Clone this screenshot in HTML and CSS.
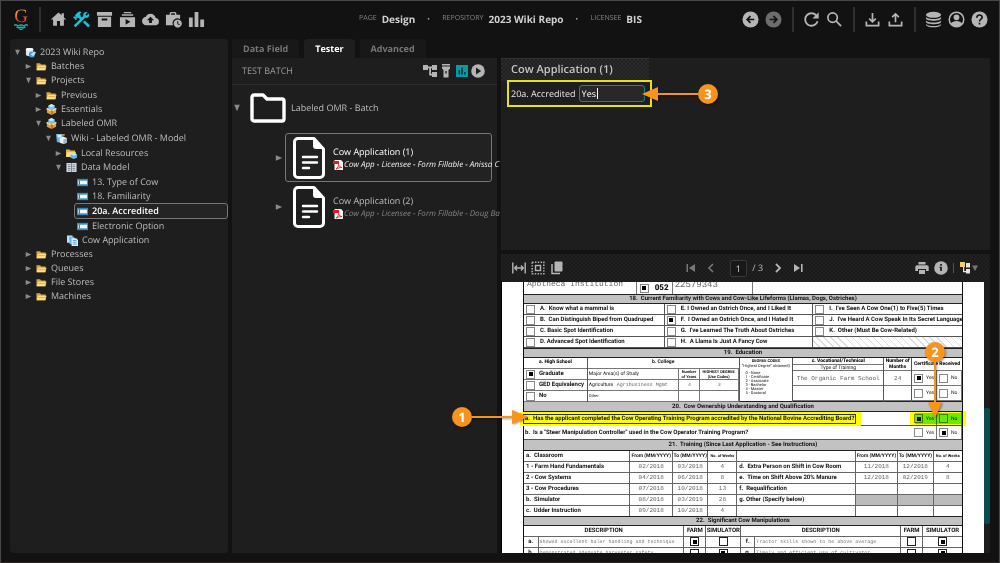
FILE: index.html
```html
<!DOCTYPE html>
<html lang="en">
<head>
<meta charset="utf-8">
<title>Design - 2023 Wiki Repo</title>
<link rel="stylesheet" href="styles.css">
</head>
<body>
<svg class="defs" aria-hidden="true">
  <symbol id="i-arrow" viewBox="0 0 10 10"><path d="M1 1.500l8 3.500-8 3.500z"/></symbol>
  <symbol id="i-folder" viewBox="0 0 12 10"><path fill="#d9a441" d="M.5 1.500h4l1 1.200h5v6.500H.5z"/><path fill="#ffe08a" d="M2.200 4.200h9.300l-1.500 5H.7z"/><path stroke="#c98b2b" stroke-width=".7" fill="none" d="M2.500 6.500c2-1.500 5 1 8-.8"/></symbol>
  <symbol id="i-box" viewBox="0 0 12 12"><path fill="#e0a040" d="M1 5l5 2 5-2v4.500L6 12 1 9.500z"/><path fill="#8a5a1c" d="M6 7v5l1.200-.6V6.500z"/><path fill="#f4cf86" d="M0 5.500L1.500 4 6 6l4.500-2L12 5.500 8 8 6 7 4 8z"/><path fill="#7cc4ee" d="M6 0l3.500 1.800v3L6 6.500 2.500 4.800v-3z"/><path fill="#c9e9fb" d="M6 0l3.500 1.800L6 3.500 2.500 1.800z"/></symbol>
  <symbol id="i-repo" viewBox="0 0 12 12"><path fill="#dfe7ee" d="M1 2.500C1 .5 9 .5 9 2.500v6C9 10.500 1 10.500 1 8.500z"/><ellipse cx="5" cy="2.500" rx="4" ry="1.300" fill="#fff"/><circle cx="7.500" cy="8.200" r="3.300" fill="#4b97d2"/><path fill="#bfe0f7" d="M6 8l4-3 2 1-3 4z"/></symbol>
  <symbol id="i-model" viewBox="0 0 12 12"><path fill="#5fb4e5" d="M0 1h7l1 2v7H1z"/><path fill="#d7effc" d="M1.500 2h4.500v3h-4z"/><path fill="#eef3f6" d="M4 5.500l4-1.500 4 1.500v5L8 12l-4-1.500z"/><path fill="#e2852b" d="M7 1h2.500v2H7z"/><path fill="#9fb6c5" d="M8 7l4-1.500v5L8 12z"/></symbol>
  <symbol id="i-res" viewBox="0 0 12 12"><path fill="#e5b04a" d="M0 1.500h4l1 1.200h5v7H0z"/><path fill="#ffe08a" d="M1 4.500h10l-1.500 5H0z"/><path fill="#63b4e8" d="M5 7l3.500-1.500L12 7v3.500L8.500 12 5 10.500z"/><path fill="#c9e9fb" d="M5 7l3.500-1.500L12 7 8.500 8.500z"/></symbol>
  <symbol id="i-sheet" viewBox="0 0 12 12"><path fill="#d8dbe2" d="M.5 1h11v10H.5z"/><path stroke="#6f7787" stroke-width=".9" d="M2 3h3M2 5h3M2 7h3M2 9h3M7 3h3M7 5h3M7 7h3M7 9h3M6 1v10"/></symbol>
  <symbol id="i-field" viewBox="0 0 12 8"><rect width="12" height="8" fill="#2f8cc4"/><rect x="1" y="2" width="10" height="4" fill="#f4f8fb"/><path stroke="#333" d="M2.500 2v4"/></symbol>
  <symbol id="i-docs" viewBox="0 0 12 12"><path fill="#bfe3f8" d="M0 .5h6v8H0z"/><path fill="#6ab8e6" d="M2 2h6v8H3z"/><path fill="#d6effc" d="M5 3.500h5l2 2V12H5z"/><path stroke="#3f8fc0" stroke-width=".8" d="M6.500 6h4M6.500 8h4M6.500 10h4"/></symbol>
  <symbol id="i-page" viewBox="0 0 32 42"><path fill="none" stroke="#fff" stroke-width="3" stroke-linejoin="round" d="M5 1.500h16L30.500 12v25a3.500 3.500 0 0 1-3.500 3.500H5A3.500 3.500 0 0 1 1.500 37V5A3.500 3.500 0 0 1 5 1.500z"/><path fill="#fff" d="M20 2l10 10h-7c-2 0-3-1-3-3z"/><path stroke="#fff" stroke-width="2.400" stroke-linecap="round" d="M10 20h14M10 25.500h14M10 31h6"/></symbol>
  <symbol id="i-pdf" viewBox="0 0 10 10"><path fill="#f4f4f4" d="M1.500 0H8l2 2v8H1.500z"/><path fill="#e01b1b" d="M0 1h6v3H0z"/><path fill="none" stroke="#d22" stroke-width=".9" d="M3 9c2-1.500 2.500-3 2.500-4.500.5 2 2 3 3.500 3-2 0-4 .5-6 1.500z"/></symbol>
</svg>

<header class="topbar">
  <nav class="tools" aria-label="Main">
    <a class="logo" href="#" aria-label="Home page"><span class="logo-g">G</span><svg class="logo-mark" viewBox="0 0 14 6"><path fill="none" stroke="#16a5a0" stroke-width="1.400" d="M0 1.500l2-1 2 1.500L7 .8l3 1.200 2-1.500 2 1M2.500 3L5 4l2-1 2 1 2.500-1M5.500 5L7 5.600 8.500 5"/></svg></a>
    <span class="sep"></span>
    <button class="tool" aria-label="Home"><svg viewBox="1 2 22 20"><path d="M19 9.300V4h-3v2.600L12 3 2 12h3v8h5v-6h4v6h5v-8h3l-3-2.700z"/></svg></button>
    <button class="tool tool-on" aria-label="Design"><svg viewBox="2 2 20 20"><path d="M13.780 15.300l6 6 2.110-2.160-6-6-2.110 2.160M17.500 10.100c-.39 0-.81-.05-1.140-.19L4.970 21.250l-2.110-2.110 7.410-7.400L8.500 9.960l-.72.7-1.450-1.410v2.860l-.7.7-3.520-3.560.7-.7h2.810l-1.400-1.410 3.560-3.560c1.170-1.170 3.050-1.170 4.220 0L9.890 5.740l1.410 1.400-.71.71 1.790 1.780 1.820-1.880C14.060 7.420 14 7 14 6.630c0-1.970 1.560-3.520 3.500-3.520.59 0 1.110.14 1.580.42L16.410 6.200l1.500 1.500 2.670-2.670c.28.470.42.97.42 1.600 0 1.920-1.550 3.470-3.500 3.470z"/></svg></button>
    <button class="tool" aria-label="Batches"><svg viewBox="0 0 18 18"><path fill-rule="evenodd" d="M1 1h16v4H1zM2 6h14v11H2zM6 8v2h6V8z"/></svg></button>
    <button class="tool" aria-label="Tasks"><svg viewBox="0 0 18 18"><path fill-rule="evenodd" d="M5 1h8v1.500H5zM3 3.500h12V5H3zM1 6.500h16V17H1zM7 8.500v6l5-3z"/></svg></button>
    <button class="tool" aria-label="Imports"><svg viewBox="0 1 24 22"><path d="M19.350 10.040C18.670 6.590 15.640 4 12 4 9.110 4 6.600 5.640 5.350 8.040 2.340 8.360 0 10.910 0 14c0 3.310 2.690 6 6 6h13c2.760 0 5-2.240 5-5 0-2.640-2.050-4.780-4.650-4.960zM14 13v4h-4v-4H7l5-5 5 5h-3z"/></svg></button>
    <button class="tool" aria-label="Jobs"><svg viewBox="0 0 18 18"><path fill-rule="evenodd" d="M6 1h5l1 1v2h4v4.500A5.200 5.200 0 0 0 8.500 15H1V4h4V2zm.5 1.500V4h4V2.500z"/><path fill-rule="evenodd" d="M13.500 9a4.300 4.300 0 1 0 .01 0zM13 10.500h1v2.700l1.800 1-.5.900L13 13.800z"/></svg></button>
    <button class="tool" aria-label="Stats"><svg viewBox="0 0 18 18"><path d="M1 7h4v10H1zM7 1h4v16H7zM13 9h4v8h-4z"/></svg></button>
  </nav>
  <dl class="crumbs">
    <div><dt>PAGE</dt><dd>Design</dd></div>
    <div><dt>REPOSITORY</dt><dd>2023 Wiki Repo</dd></div>
    <div><dt>LICENSEE</dt><dd>BIS</dd></div>
  </dl>
  <nav class="tools tools-end" aria-label="Actions">
    <button class="tool" aria-label="Back"><svg viewBox="0 0 18 18"><circle cx="9" cy="9" r="8.500"/><path fill="none" stroke="#111" stroke-width="1.800" d="M13 9H6M9 5.500L5.500 9 9 12.500"/></svg></button>
    <button class="tool tool-dim" aria-label="Forward"><svg viewBox="0 0 18 18"><circle cx="9" cy="9" r="8.500"/><path fill="none" stroke="#111" stroke-width="1.800" d="M5 9h7M9 5.500l3.500 3.500L9 12.500"/></svg></button>
    <span class="sep"></span>
    <button class="tool" aria-label="Refresh"><svg viewBox="2.500 2.500 19 19"><path d="M17.650 6.350C16.200 4.900 14.210 4 12 4c-4.420 0-7.990 3.580-7.990 8s3.570 8 7.990 8c3.730 0 6.840-2.550 7.730-6h-2.080c-.82 2.330-3.040 4-5.650 4-3.310 0-6-2.690-6-6s2.690-6 6-6c1.660 0 3.140.69 4.220 1.780L13 11h7V4l-2.350 2.350z"/></svg></button>
    <button class="tool" aria-label="Search"><svg viewBox="0 0 18 18"><g fill="none" stroke="currentColor" stroke-width="1.800"><circle cx="7" cy="7" r="5"/><path d="M10.500 10.500L16 16"/></g></svg></button>
    <span class="sep"></span>
    <button class="tool" aria-label="Download"><svg viewBox="0 0 18 18"><path fill="none" stroke="currentColor" stroke-width="1.800" d="M9 2v9M5.500 8L9 11.500 12.500 8M2.500 11v4.500h13V11"/></svg></button>
    <button class="tool" aria-label="Upload"><svg viewBox="0 0 18 18"><path fill="none" stroke="currentColor" stroke-width="1.800" d="M9 12V3M5.500 6.500L9 3l3.500 3.500M2.500 11v4.500h13V11"/></svg></button>
    <span class="sep"></span>
    <button class="tool" aria-label="Repositories"><svg viewBox="0 0 18 18"><ellipse cx="9" cy="4" rx="8" ry="3.200"/><path d="M1 6.300c2 3 14 3 16 0v1.600c-1 3.200-15 3.200-16 0zM1 10c2 3 14 3 16 0v1.600c-1 3.200-15 3.200-16 0zM1 13.700c2 3 14 3 16 0v.8c-1 3.700-15 3.700-16 0z"/></svg></button>
    <button class="tool" aria-label="Account"><svg viewBox="0 0 18 18"><circle cx="9" cy="9" r="7.700" fill="none" stroke="currentColor" stroke-width="1.600"/><circle cx="9" cy="6.700" r="3"/><path d="M3 13.500c2-4 10-4 12 0-2.500 4-9.500 4-12 0z"/></svg></button>
    <button class="tool" aria-label="Help"><svg viewBox="0 0 18 18"><circle cx="9" cy="9" r="8.500"/><path fill="none" stroke="#111" stroke-width="1.700" d="M6.200 7.200c0-4 5.800-3.600 5.600-.4C11.700 8.600 9 8.600 9 11M9 12.500v1.900"/></svg></button>
  </nav>
</header>

<main class="workspace">
  <nav class="panel sidebar" aria-label="Repository tree">
    <ul class="tree">
      <li><a class="node" href="#"><svg class="arrow open"><use href="#i-arrow"/></svg><svg class="ico"><use href="#i-repo"/></svg>2023 Wiki Repo</a>
        <ul>
          <li><a class="node" href="#"><svg class="arrow"><use href="#i-arrow"/></svg><svg class="ico"><use href="#i-folder"/></svg>Batches</a></li>
          <li><a class="node" href="#"><svg class="arrow open"><use href="#i-arrow"/></svg><svg class="ico"><use href="#i-folder"/></svg>Projects</a>
            <ul>
              <li><a class="node" href="#"><svg class="arrow"><use href="#i-arrow"/></svg><svg class="ico"><use href="#i-folder"/></svg>Previous</a></li>
              <li><a class="node" href="#"><svg class="arrow"><use href="#i-arrow"/></svg><svg class="ico"><use href="#i-box"/></svg>Essentials</a></li>
              <li><a class="node" href="#"><svg class="arrow open"><use href="#i-arrow"/></svg><svg class="ico"><use href="#i-box"/></svg>Labeled OMR</a>
                <ul>
                  <li><a class="node" href="#"><svg class="arrow open"><use href="#i-arrow"/></svg><svg class="ico"><use href="#i-model"/></svg>Wiki - Labeled OMR - Model</a>
                    <ul>
                      <li><a class="node" href="#"><svg class="arrow"><use href="#i-arrow"/></svg><svg class="ico"><use href="#i-res"/></svg>Local Resources</a></li>
                      <li><a class="node" href="#"><svg class="arrow open"><use href="#i-arrow"/></svg><svg class="ico"><use href="#i-sheet"/></svg>Data Model</a>
                        <ul>
                          <li><a class="node leaf" href="#"><svg class="ico"><use href="#i-field"/></svg>13. Type of Cow</a></li>
                          <li><a class="node leaf" href="#"><svg class="ico"><use href="#i-field"/></svg>18. Familiarity</a></li>
                          <li><a class="node leaf selected" href="#" aria-current="true"><svg class="ico"><use href="#i-field"/></svg>20a. Accredited</a></li>
                          <li><a class="node leaf" href="#"><svg class="ico"><use href="#i-field"/></svg>Electronic Option</a></li>
                        </ul>
                      </li>
                      <li><a class="node leaf" href="#"><svg class="ico"><use href="#i-docs"/></svg>Cow Application</a></li>
                    </ul>
                  </li>
                </ul>
              </li>
            </ul>
          </li>
          <li><a class="node" href="#"><svg class="arrow"><use href="#i-arrow"/></svg><svg class="ico"><use href="#i-folder"/></svg>Processes</a></li>
          <li><a class="node" href="#"><svg class="arrow"><use href="#i-arrow"/></svg><svg class="ico"><use href="#i-folder"/></svg>Queues</a></li>
          <li><a class="node" href="#"><svg class="arrow"><use href="#i-arrow"/></svg><svg class="ico"><use href="#i-folder"/></svg>File Stores</a></li>
          <li><a class="node" href="#"><svg class="arrow"><use href="#i-arrow"/></svg><svg class="ico"><use href="#i-folder"/></svg>Machines</a></li>
        </ul>
      </li>
    </ul>
  </nav>

  <section class="tester">
    <div class="tabs" role="tablist">
      <button class="tab" role="tab">Data Field</button>
      <button class="tab tab-on" role="tab" aria-selected="true">Tester</button>
      <button class="tab" role="tab">Advanced</button>
    </div>
    <div class="panel tester-body">
      <div class="tester-head">
        <h2>TEST BATCH</h2>
        <button class="mini" aria-label="Tree"><svg viewBox="0 0 14 14"><path d="M0 1h5v5H0zM9 1h5v5H9zM9 8h5v5H9zM5 2.500h4v1.800H8v5.500h1v1.700H6.200V4.300H5z"/></svg></button>
        <button class="mini" aria-label="Inspect"><svg viewBox="0 0 14 14"><path fill-rule="evenodd" d="M3 0h8v1.600H3zM3 2.600h8v2L9.500 6v7.500h-5V6L3 4.600zM6.300 7v2.500h1.400V7z"/></svg></button>
        <button class="mini" aria-label="Stats"><svg viewBox="0 0 14 14"><rect x="1" y="1" width="12" height="12" fill="#0a9aa5"/><path fill="#0c3539" d="M3.500 6h1.600v4.500H3.500zM6.300 3.500h1.600v7H6.300zM9.100 8h1.600v2.500H9.100z"/></svg></button>
        <button class="mini" aria-label="Run"><svg viewBox="0 0 14 14"><circle cx="7" cy="7" r="6.800"/><path fill="#1e1e1e" d="M5 3.600v6.800L10.200 7z"/></svg></button>
      </div>
      <div class="batch">
        <svg class="arrow open"><use href="#i-arrow"/></svg>
        <svg class="folder" viewBox="0 0 36 30"><path fill="none" stroke="#fff" stroke-width="3.400" stroke-linejoin="round" d="M2 4a2 2 0 0 1 2-2h9l4 4h15a2 2 0 0 1 2 2v18a2 2 0 0 1-2 2H4a2 2 0 0 1-2-2z"/></svg>
        <span>Labeled OMR - Batch</span>
      </div>
      <ul class="docs">
        <li class="doc"><svg class="arrow"><use href="#i-arrow"/></svg>
          <a class="doc-card doc-on" href="#"><svg class="doc-ico"><use href="#i-page"/></svg><span class="doc-text"><span class="doc-title">Cow Application (1)</span><span class="doc-sub"><svg class="pdf"><use href="#i-pdf"/></svg>Cow App - Licensee - Form Fillable - Anissa C</span></span></a></li>
        <li class="doc"><svg class="arrow"><use href="#i-arrow"/></svg>
          <a class="doc-card" href="#"><svg class="doc-ico"><use href="#i-page"/></svg><span class="doc-text"><span class="doc-title">Cow Application (2)</span><span class="doc-sub"><svg class="pdf"><use href="#i-pdf"/></svg>Cow App - Licensee - Form Fillable - Doug Ba</span></span></a></li>
      </ul>
    </div>
  </section>

  <section class="detail">
    <div class="panel data">
      <h2 class="data-title">Cow Application (1)</h2>
      <div class="field">
        <label for="acc">20a. Accredited</label>
        <span class="field-box"><input id="acc" type="text" value="Yes"><i class="caret"></i></span>
      </div>
    </div>

    <div class="viewer">
      <div class="viewbar">
        <button class="mini" aria-label="Fit width"><svg viewBox="0 0 14 14"><path fill="none" stroke="currentColor" stroke-width="1.400" d="M.8 1.500v11M13.200 1.500v11M3 7h8M5 4.500L2.700 7 5 9.500M9 4.500L11.300 7 9 9.500"/></svg></button>
        <button class="mini" aria-label="Fit page"><svg viewBox="0 0 14 14"><g fill="none" stroke="currentColor"><rect x="1.200" y="1.200" width="11.600" height="11.600" stroke-width="1.600" stroke-dasharray="1.400 1.400"/><rect x="4.500" y="4.500" width="5" height="5" stroke-width="1.400"/></g></svg></button>
        <button class="mini" aria-label="Pages"><svg viewBox="0 0 14 14"><path d="M5.500 .5h6a1 1 0 0 1 1 1v8a1 1 0 0 1-1 1h-6a1 1 0 0 1-1-1v-8a1 1 0 0 1 1-1z"/><path fill="none" stroke="currentColor" stroke-width="1.500" d="M2 3v9.500h8"/></svg></button>
        <div class="pager">
          <button class="mini off" aria-label="First page"><svg viewBox="0 0 14 14"><path d="M2.500 3h1.500v8H2.500zM11 3v8L5 7z"/></svg></button>
          <button class="mini off" aria-label="Previous page"><svg viewBox="0 0 14 14"><path fill="none" stroke="currentColor" stroke-width="1.600" d="M9 3L5 7l4 4"/></svg></button>
          <span class="pageno"><input type="text" value="1" aria-label="Page"> / 3</span>
          <button class="mini" aria-label="Next page"><svg viewBox="0 0 14 14"><path fill="none" stroke="currentColor" stroke-width="1.800" d="M5 3l4 4-4 4"/></svg></button>
          <button class="mini" aria-label="Last page"><svg viewBox="0 0 14 14"><path d="M10 3h1.600v8H10zM3 3v8l6-4z"/></svg></button>
        </div>
        <button class="mini" aria-label="Print"><svg viewBox="0 0 14 14"><path fill-rule="evenodd" d="M3.500 1h7v2.500h-7zM2 4.200h10a1.700 1.700 0 0 1 1.700 1.700v4H11V8H3v1.900H.3v-4A1.700 1.700 0 0 1 2 4.200zM4 9h6v4H4z"/></svg></button>
        <button class="mini" aria-label="Info"><svg viewBox="0 0 14 14"><circle cx="7" cy="7" r="6.800"/><path fill="#1a1a1a" d="M6.200 3h1.700v1.700H6.200zM5.500 5.800h2.400V10H6.200V7h-.7z"/></svg></button>
        <span class="sep sep-short"></span>
        <button class="mini wide" aria-label="Layers"><svg viewBox="0 0 20 14"><path fill="#f2cf6b" d="M1 1h5v5H1z"/><path fill="#e6e6e6" d="M7 2h4v4.500H7zM7 8h4v4.500H7zM4 6h1.200v4H7v1.200H4z"/><path fill="#777" d="M13 4.500h6l-3 5.500z"/></svg></button>
      </div>
      <div class="canvas">
        <article class="sheet">
          <div class="form">
            <div class="r-inst"><span class="typed">Apotheca Institution</span><span class="code"><input type="checkbox" checked aria-label="052"><b>052</b></span><span class="typed typed-big">22579343</span><span></span></div>
            <h3>18.&nbsp; Current Familiarity with Cows and Cow-Like Lifeforms (Llamas, Dogs, Ostriches)</h3>
            <div class="r-choices">
              <label><input type="checkbox">A.&nbsp; Know what a mammal is</label>
              <label><input type="checkbox">B.&nbsp; Can Distinguish Biped from Quadruped</label>
              <label><input type="checkbox">C. Basic Spot Identification</label>
              <label><input type="checkbox">D. Advanced Spot Identification</label>
              <label><input type="checkbox">E. I Owned an Ostrich Once, and I Liked It</label>
              <label><input type="checkbox" checked>F.&nbsp; I Owned an Ostrich Once, and I Hated It</label>
              <label><input type="checkbox">G.&nbsp; I've Learned The Truth About Ostriches</label>
              <label><input type="checkbox">H.&nbsp; A Llama Is Just A Fancy Cow</label>
              <label><input type="checkbox">I.&nbsp; I've Seen A Cow One(1) to Five(5) Times</label>
              <label><input type="checkbox">J.&nbsp; I've Heard A Cow Speak In Its Secret Language</label>
              <label><input type="checkbox">K.&nbsp; Other (Must Be Cow-Related)</label>
              <span class="hatch"></span>
            </div>
            <h3>19.&nbsp; Education</h3>
            <div class="r-edu">
              <div class="e-school"><b class="mid">a. High School</b><label><input type="checkbox" checked>Graduate</label><label><input type="checkbox">GED Equivalency</label><label><input type="checkbox">No</label></div>
              <div class="e-college"><b class="mid span">b. College</b>
                <span>Major Area(s) of Study</span><span class="two">Number<br>of Years</span><span class="two">HIGHEST DEGREE<br>(Use Codes)</span>
                <span>Agriculture &nbsp; <i class="typed tiny">Agribusiness Mgmt</i></span><span class="typed tiny mid">4</span><span class="typed tiny mid">3</span>
                <span class="small">Other:</span><span></span><span></span></div>
              <div class="e-codes"><b>DEGREE CODES</b>"Highest Degree" obtained)<ol><li>0 - None</li><li>1 - Certificate</li><li>2 - Associate</li><li>3 - Bachelor</li><li>4 - Master</li><li>5 - Doctoral</li></ol></div>
              <div class="e-voc"><b>c. Vocational/Technical</b><span>Type of Training</span><span class="typed">The Organic Farm School</span><span></span></div>
              <div class="e-months"><b>Number of<br>Months</b><span class="typed">24</span><span></span></div>
              <div class="e-cert"><b>Certificate Received</b><label><input type="checkbox" checked>Yes</label><label><input type="checkbox">No</label><label><input type="checkbox">Yes</label><label><input type="checkbox">No</label></div>
            </div>
            <h3 class="tall">20.&nbsp; Cow Ownership Understanding and Qualification</h3>
            <div class="r-ask"><span class="ask marked">a.&nbsp; Has the applicant completed the Cow Operating Training Program accredited by the National Bovine Accrediting Board?</span><label><input type="checkbox" checked>Yes</label><label><input type="checkbox">No</label><i class="glow"></i></div>
            <div class="r-ask"><span class="ask">b.&nbsp; Is a "Steer Manipulation Controller" used in the Cow Operator Training Program?</span><label><input type="checkbox">Yes</label><label><input type="checkbox" checked>No</label></div>
            <h3 class="tall">21.&nbsp; Training (Since Last Application - See Instructions)</h3>
            <table class="training">
              <colgroup><col class="c-name"><col class="c-from"><col class="c-to"><col class="c-wk"><col class="c-name2"><col class="c-from"><col class="c-to"><col class="c-wk"></colgroup>
              <tr><th>a.&nbsp; Classroom</th><th class="hd">From (MM/YYYY)</th><th class="hd">To (MM/YYYY)</th><th class="hd hd-wk">No. of Weeks</th><th></th><th class="hd">From (MM/YYYY)</th><th class="hd">To (MM/YYYY)</th><th class="hd hd-wk">No. of Weeks</th></tr>
              <tr><th>1 - Farm Hand Fundamentals</th><td>02/2018</td><td>03/2018</td><td>4</td><th>d.&nbsp; Extra Person on Shift in Cow Room</th><td>11/2018</td><td>12/2018</td><td>4</td></tr>
              <tr><th>2 - Cow Systems</th><td>04/2018</td><td>06/2018</td><td>8</td><th>e.&nbsp; Time on Shift Above 20% Manure</th><td>12/2018</td><td>02/2019</td><td>8</td></tr>
              <tr><th>3 - Cow Procedures</th><td>07/2018</td><td>10/2018</td><td>13</td><th>f.&nbsp; Requalification</th><td></td><td></td><td></td></tr>
              <tr><th>b.&nbsp; Simulator</th><td>08/2018</td><td>03/2019</td><td>28</td><th>g. Other (Specify below)</th><td class="grey"></td><td class="grey"></td><td class="grey"></td></tr>
              <tr><th>c.&nbsp; Udder Instruction</th><td>09/2018</td><td>10/2018</td><td>4</td><th></th><td></td><td></td><td></td></tr>
            </table>
            <h3>22.&nbsp; Significant Cow Manipulations</h3>
            <table class="manip">
              <colgroup><col class="m-key"><col class="m-desc"><col class="m-farm"><col class="m-sim"><col class="m-key"><col class="m-desc"><col class="m-farm"><col class="m-sim2"></colgroup>
              <tr><th colspan="2">DESCRIPTION</th><th>FARM</th><th>SIMULATOR</th><th colspan="2">DESCRIPTION</th><th>FARM</th><th>SIMULATOR</th></tr>
              <tr><th>a.</th><td>Showed excellent baler handling and technique</td><td><input type="checkbox" checked aria-label="Farm a"></td><td><input type="checkbox" aria-label="Simulator a"></td><th>f.</th><td>Tractor skills shown to be above average</td><td><input type="checkbox" aria-label="Farm f"></td><td><input type="checkbox" checked aria-label="Simulator f"></td></tr>
              <tr><th>b.</th><td>Demonstrated adequate harvester safety</td><td><input type="checkbox" aria-label="Farm b"></td><td><input type="checkbox" checked aria-label="Simulator b"></td><th>g.</th><td>Timely and efficient use of cultivator</td><td><input type="checkbox" aria-label="Farm g"></td><td><input type="checkbox" checked aria-label="Simulator g"></td></tr>
            </table>
          </div>
        </article>
        <div class="scroll"><div class="thumb"></div></div>
      </div>
    </div>
  </section>
</main>

<div class="callout callout-1"><b>1</b><svg viewBox="0 0 56 20"><path d="M0 9h40V3l16 7-16 7v-6H0z"/></svg></div>
<div class="callout callout-2"><b>2</b><svg viewBox="0 0 20 56"><path d="M9 0v40H3l7 16 7-16h-6V0z"/></svg></div>
<div class="callout callout-3"><svg viewBox="0 0 56 20"><path d="M56 9H16V3L0 10l16 7v-6h40z"/></svg><b>3</b></div>
</body>
</html>
```
FILE: styles.css
```css
* { box-sizing: border-box; }
body {
  margin: 0;
  height: 100vh;
  position: relative;
  display: flex;
  flex-direction: column;
  overflow: hidden;
  background: #121212;
  border: 1px solid #484848;
  border-bottom-color: #2a2626;
  color: #bcbcbc;
  font: 9px/14px "Open Sans", "Noto Sans", sans-serif;
  text-rendering: geometricPrecision;
}
ul, ol, dl, dd, h2, h3 { margin: 0; padding: 0; list-style: none; font-size: inherit; }
a { color: inherit; text-decoration: none; }
button { margin: 0; padding: 0; border: 0; background: none; color: inherit; font: inherit; text-rendering: inherit; }
input { text-rendering: inherit; }
svg { display: block; fill: currentColor; flex: none; }
.defs { position: absolute; width: 0; height: 0; }
.panel { background: #1e1e1e; }

/* top bar */
.topbar { display: grid; grid-template-columns: 1fr auto 1fr; align-items: center; height: 36px; padding: 0 10px 0 11px; }
.tools { display: flex; align-items: center; gap: 5px; color: #b5b5b5; }
.tools-end { justify-content: flex-end; }
.tool { width: 18px; height: 18px; }
.tool svg { width: 17px; height: 17px; }
.tool-on { color: #16c5d6; }
.tool-dim { color: #6d6d6d; }
.logo { width: 18px; display: grid; justify-items: center; }
.logo-g { font: 19px/15px "Liberation Serif", serif; background: linear-gradient(#f5a028 20%, #e2352c 80%); -webkit-background-clip: text; color: transparent; }
.logo-mark { width: 14px; height: 6px; }
.sep { width: 2px; height: 25px; margin: 0 4px; background: #303030; }
.sep-short { width: 1px; height: 10px; margin: 0; background: #555; }
.crumbs { display: flex; gap: 27px; }
.crumbs div { display: flex; align-items: center; gap: 5px; position: relative; }
.crumbs div + div::before { content: "·"; position: absolute; left: -15px; font-weight: 700; }
.crumbs dt { font-size: 7px; color: #858585; }
.crumbs dd { font-size: 10px; font-weight: 700; color: #d0d0d0; }

/* columns */
.workspace { flex: 1; min-height: 0; display: grid; grid-template-columns: 218fr 265fr 489fr; gap: 4px; padding: 2px 9px 9px; }
.sidebar { border-radius: 4px; padding: 6px 0 0 1px; overflow: hidden; }

/* tree */
.tree ul { padding-left: 11px; }
.tree ul ul { padding-left: 10px; padding-top: 1px; }
.node { display: flex; align-items: center; gap: 4px; height: 14px; white-space: nowrap; }
.arrow { width: 8px; height: 8px; fill: #8a8a8a; }
.arrow.open { transform: rotate(90deg); }
.ico { width: 11px; height: 11px; }
.node .arrow { width: 7px; height: 7px; margin: 0 0 0 3px; }
.leaf { padding-left: 15px; }
.selected { height: 16px; color: #fff; font-weight: 600; }
.tree .selected { margin-left: 12px; padding-left: 2px; border: 1px solid #777; border-radius: 3px; background: #242424; }

/* tester */
.tester { display: flex; flex-direction: column; min-width: 0; }
.tabs { display: flex; gap: 5px; }
.tab { height: 19px; padding: 0 11px; border-radius: 4px 4px 0 0; background: #181818; color: #777; font-weight: 700; }
.tab-on { background: #1e1e1e; color: #fff; }
.tester-body { flex: 1; }
.tester-head { display: flex; align-items: center; gap: 2px; height: 27px; padding: 0 12px 0 10px; border-bottom: 1px solid #2a2a2a; color: #999; }
.tester-head h2 { flex: 1; font-weight: 400; }
.mini, .mini svg { width: 14px; height: 14px; }
.mini { color: #b5b5b5; }
.mini.wide, .mini.wide svg { width: 20px; }
.batch { display: flex; align-items: center; gap: 5px; padding: 8px 0 10px 1px; }
.folder { width: 36px; height: 30px; margin: 0 0 0 4px; }
.docs { padding-left: 43px; }
.doc { display: flex; align-items: center; gap: 2px; }
.doc-card { flex: 1; min-width: 0; display: flex; align-items: center; gap: 8px; margin-right: 5px; height: 49px; padding-left: 7px; border: 1px solid transparent; border-radius: 3px; white-space: nowrap; }
.doc-on { border-color: #777; background: #222; color: #fff; }
.doc-ico { width: 32px; height: 42px; }
.doc-text { display: grid; }
.doc-title { line-height: 14px; }
.doc-sub { display: flex; align-items: center; gap: 1px; font-size: 8px; line-height: 11px; font-style: italic; color: #858585; }
.doc-on .doc-sub { color: #eee; }
.pdf { width: 10px; height: 10px; }

/* detail */
.detail { display: grid; grid-template-rows: 192fr 298fr; gap: 4px; padding-top: 19px; min-height: 0; }
.data { overflow: hidden; }
.data-title { width: 148px; padding: 0 10px; line-height: 22px; font-size: 11px; font-weight: 600; color: #c4c4c4; background: repeating-conic-gradient(#202020 0 25%, #2b2b2b 0 50%) 0 0 / 4px 4px; border-top: 1px solid #333; }
.field { display: flex; align-items: center; gap: 3px; width: 145px; height: 27px; margin: -1px 0 0 6px; padding: 0 5px 0 2px; border: 2px solid #e8e01c; color: #e6e6e6; white-space: nowrap; }
.field-box { flex: 1; display: grid; align-items: center; position: relative; }
.field input { width: 100%; height: 17px; padding: 0 2px; border: 1px solid #1d8087; border-radius: 3px; background: #282828; color: #fff; font: inherit; outline: 0; }
.caret { position: absolute; left: 18px; width: 1px; height: 11px; background: #fff; }

/* viewer */
.viewer { display: flex; flex-direction: column; min-height: 0; min-width: 0; }
.viewbar { display: flex; align-items: center; gap: 5px; height: 28px; padding: 0 11px; background: repeating-conic-gradient(#1b1b1b 0 25%, #202020 0 50%) 0 0 / 4px 4px; }
.pager { flex: 1; display: flex; justify-content: center; align-items: center; gap: 6px; padding-left: 10px; }
.off { color: #777; }
.pageno { display: flex; align-items: center; gap: 3px; padding: 0 2px 0 6px; white-space: pre; }
.pageno input { width: 17px; height: 17px; padding: 0; text-align: center; border: 1px solid #383838; border-radius: 2px; background: #181818; color: #ddd; font: inherit; }
.canvas { flex: 1; min-height: 0; display: flex; border-left: 1px solid #000; }
.sheet { flex: 1; min-width: 0; overflow: hidden; padding: 0 21px; background: #fff; }
.scroll { width: 6px; padding-top: 126px; background: #1d1d1d; }
.thumb { height: 116px; border-radius: 2px; background: #0c4a4e; }

/* paper form */
.form { border: solid #111; border-width: 0 1px; color: #111; font: 700 6px/8px Roboto, "Liberation Sans", sans-serif; white-space: nowrap; }
.form h3 { height: 10px; line-height: 8px; text-align: center; background: #c2c2c2; border: solid #222; border-width: 1px 0; font-size: 6px; }
.form h3.tall { height: 11px; line-height: 9px; }
.form label { display: flex; align-items: center; gap: 5px; min-width: 0; }
.form input { appearance: none; flex: none; margin: 0; width: 9px; height: 9px; border: 1px solid #888; background: #fff; }
.form input:checked { background: linear-gradient(#000, #000) center / 4px 4px no-repeat #fff; }
.typed { font: 400 6px/8px "Liberation Mono", monospace; color: #666; }
.form .tiny { font-size: 5px; }
.mid { text-align: center; }
.r-inst { display: grid; grid-template-columns: 113fr 36fr 81fr 209fr; height: 12px; overflow: hidden; }
.r-inst > * { border-right: 1px solid #777; padding-left: 3px; }
.r-inst > :last-child { border: 0; }
.r-inst .typed { font-size: 8px; line-height: 6px; }
.r-inst .typed-big { font-size: 9px; padding-left: 2px; }
.code { display: flex; align-items: center; gap: 6px; font-size: 8px; }
.r-choices { display: grid; grid: repeat(4, 11px) / auto-flow 141fr 149fr 149fr; }
.r-choices > * { border: solid #555; border-width: 0 1px 1px 0; padding-left: 2px; }
.r-choices > :nth-child(n+9) { border-right: 0; }
.hatch { background: repeating-linear-gradient(45deg, #fff 0 4px, #ddd 4px 5px); }

.r-edu { display: grid; grid-template-columns: 64fr 152fr 54fr 91fr 28fr 50fr; height: 43px; font-size: 5px; line-height: 6px; }
.r-edu > * { display: grid; min-width: 0; border-right: 1px solid #555; }
.r-edu > :last-child { border: 0; }
.r-edu > * > * { border-bottom: 1px solid #777; min-width: 0; }
.e-school, .e-college { grid-auto-rows: 1fr; align-items: stretch; }
.form .e-school label { padding-left: 2px; font-size: 6px; gap: 4px; }
.mid { line-height: 9px; }
.e-college { grid-template-columns: 92fr 21fr 39fr; font-weight: 400; }
.e-college .span { grid-column: 1 / -1; }
.e-college > span { line-height: 10px; padding-left: 1px; border-right: 1px solid #777; }
.e-college > .two { line-height: 5px; font-size: 4px; font-weight: 700; text-align: center; padding: 0; }
.small, .e-codes { font-size: 4px; }
.e-codes { align-content: start; text-align: center; line-height: 5px; font-weight: 400; }
.e-codes > * { border: 0; }
.e-codes ol { text-align: left; padding: 3px 0 0 6px; line-height: 4px; border: 0; }
.e-voc, .e-months { text-align: center; }
.e-voc { grid-template-rows: 7px 6px 15px 15px; }
.e-voc span { font-weight: 400; }
.e-months { grid-template-rows: 13px 15px 15px; }
.e-voc .typed, .e-months .typed { line-height: 15px; font-size: 6px; }
.e-cert { grid-template: 13px 15px 15px / 1fr 1fr; }
.e-cert b { grid-column: 1 / -1; line-height: 13px; text-align: center; }
.form .e-cert label, .form .r-ask label { padding-left: 2px; border-right: 1px solid #777; font-size: 5px; font-weight: 400; gap: 3px; }

.r-ask { position: relative; display: grid; grid-template-columns: 389fr 25fr 25fr; height: 14px; border-bottom: 1px solid #555; }
.r-ask + h3 { border-top: 0; }
.ask { align-self: center; justify-self: start; padding: 0 1px; }
.marked { outline: 1px solid #333; background: #ff0; box-shadow: 3px 0 0 3px #ff0, -1px 0 0 3px #ff0; }
.glow { position: absolute; right: -4px; top: -1px; width: 56px; height: 15px; border: solid #ff0; border-width: 2px 5px; background: #6de800; mix-blend-mode: multiply; }

table { width: 100%; table-layout: fixed; border-collapse: collapse; }
table th, table td { height: 11px; padding: 0 1px; border: 1px solid #666; font-size: 6px; line-height: 8px; text-align: left; }
table tr:first-child > * { border-top: 0; height: 10px; }
table tr > :first-child { border-left: 0; }
table tr > :last-child { border-right: 0; }
table tr:last-child > * { border-bottom: 0; }
.training th { padding-left: 2px; }
.training td { font: 400 6px/8px "Liberation Mono", monospace; color: #666; text-align: center; }
.training .hd { font-size: 5px; text-align: center; padding: 0; }
.training .hd-wk { font-size: 4px; }
.training .grey { background: #bbb; }
.c-name { width: 24.200%; }
.c-from { width: 9.700%; }
.c-to { width: 8.100%; }
.c-wk { width: 6.600%; }
.manip th { text-align: center; padding: 0; }
.manip td { font: 400 5px/8px "Liberation Mono", monospace; color: #777; }
.manip input { display: block; margin: 0 auto; border-color: #222; }
.m-key { width: 3.200%; }
.m-desc { width: 33.300%; }
.m-farm { width: 5%; }
.m-sim { width: 8%; }
.m-sim2 { width: 9%; }

/* callouts */
.callout { position: absolute; display: flex; align-items: center; color: #f7941d; filter: drop-shadow(1px 1px 1px #0006); }
.callout b { width: 20px; height: 20px; border-radius: 50%; background: #f7941d; color: #fff; font-size: 13px; line-height: 20px; text-align: center; }
.callout svg { width: 56px; height: 20px; }
.callout-1 { left: 451px; top: 406px; }
.callout-2 { left: 924px; top: 341px; flex-direction: column; }
.callout-2 svg { width: 20px; height: 56px; }
.callout-3 { left: 641px; top: 83px; }
```
